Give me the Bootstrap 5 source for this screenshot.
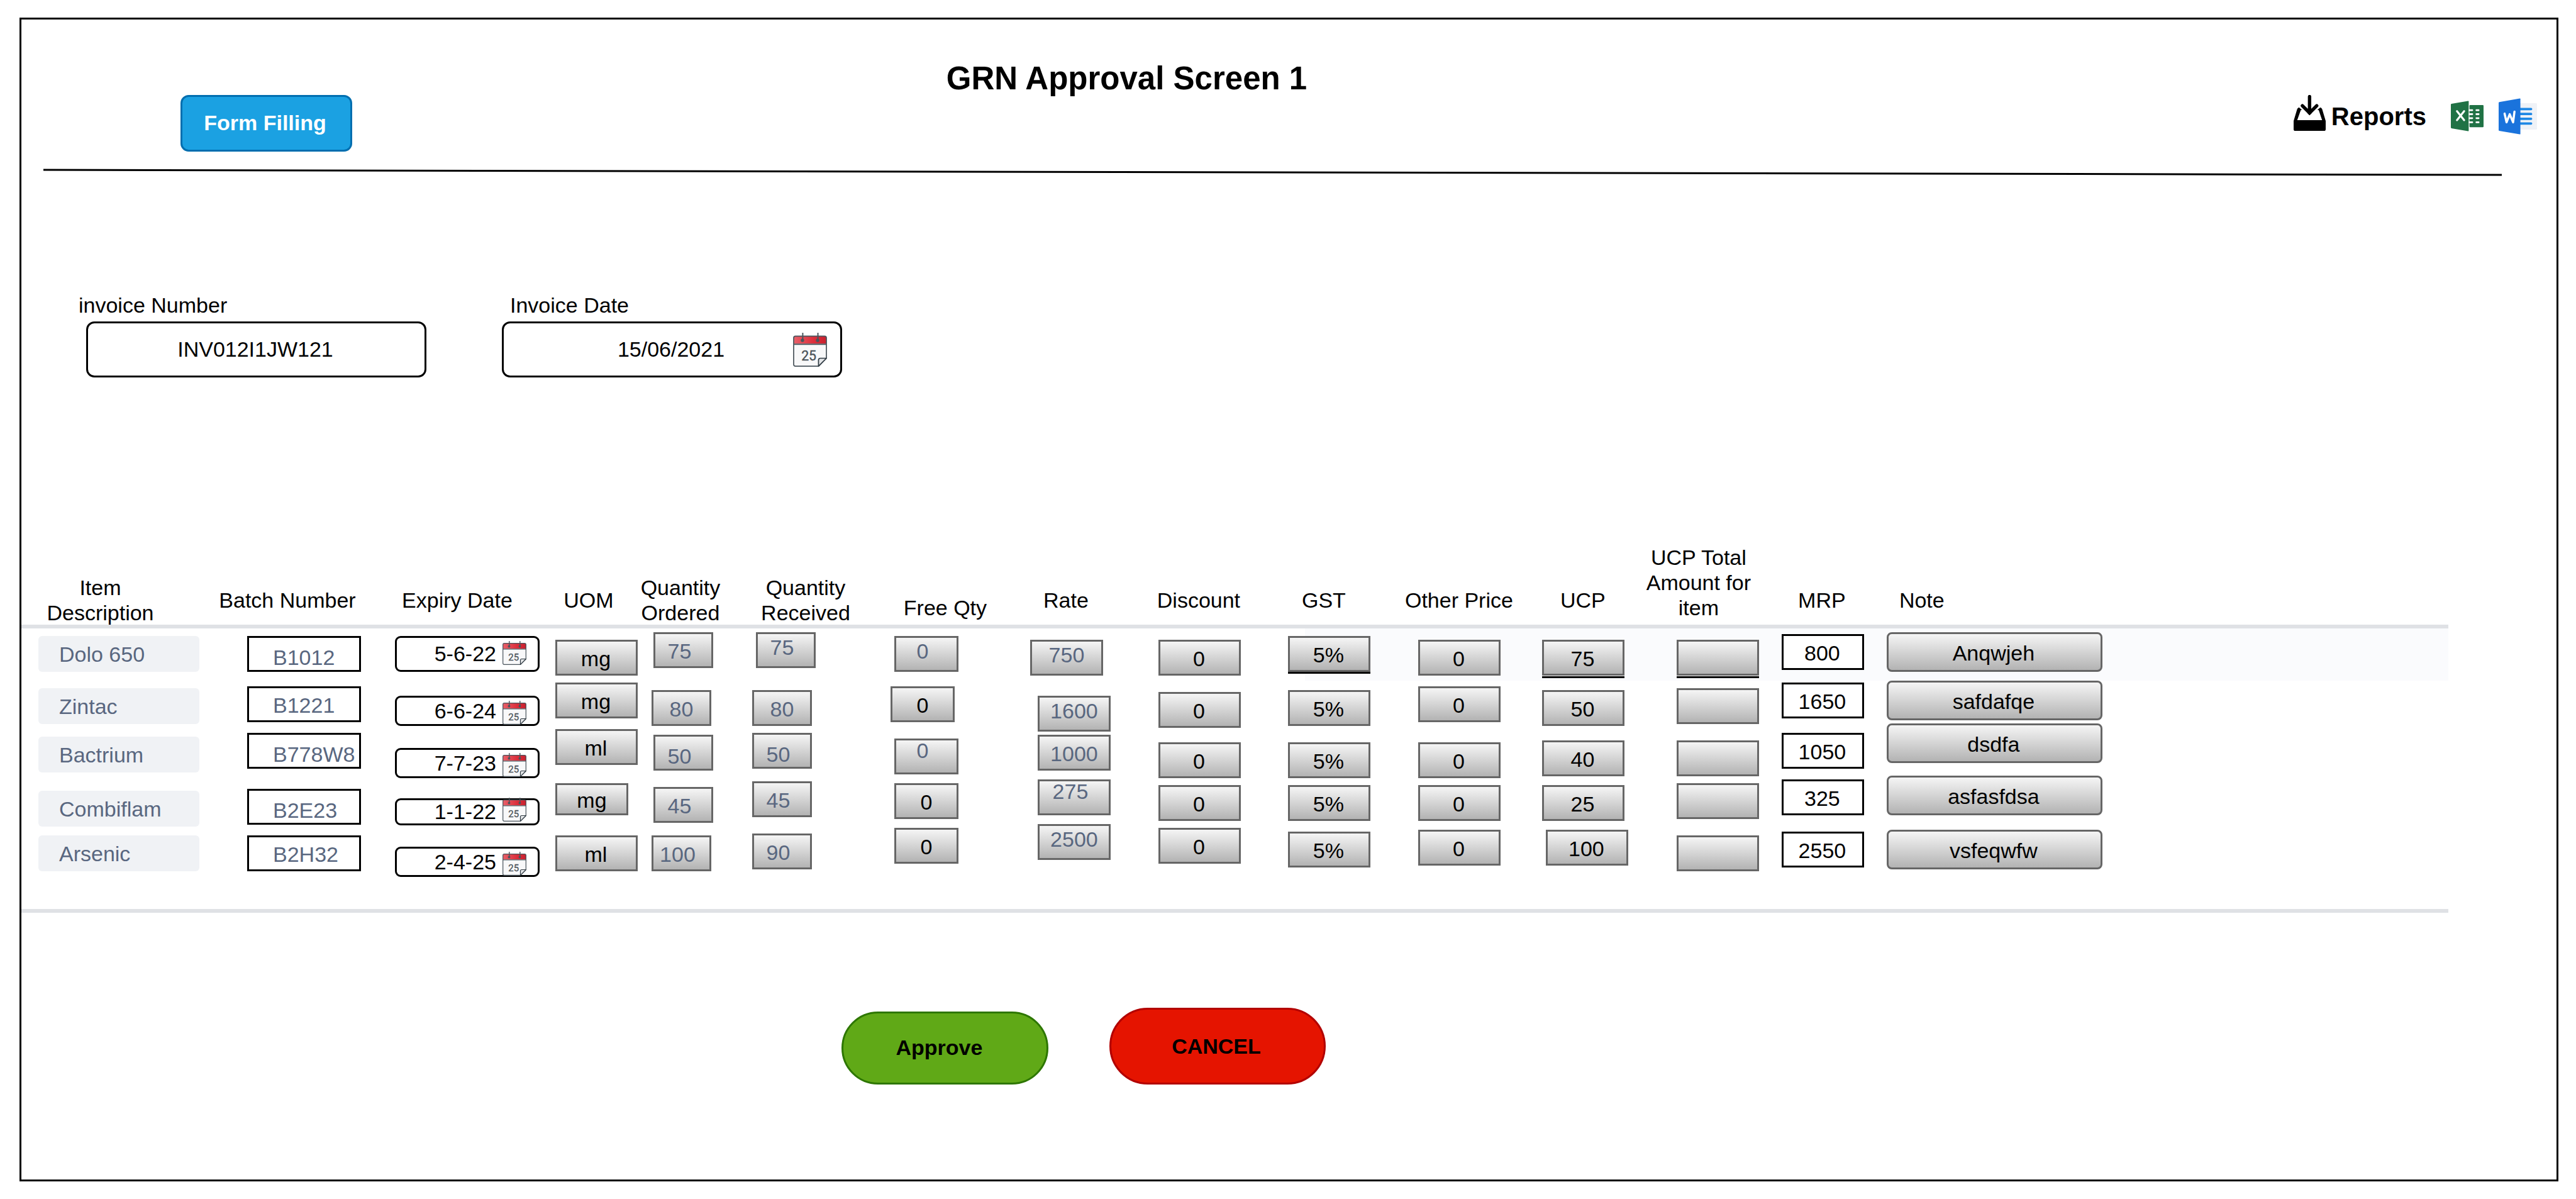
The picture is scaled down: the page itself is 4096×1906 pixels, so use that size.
<!DOCTYPE html>
<html lang="en">
<head>
<meta charset="utf-8">
<meta name="viewport" content="width=device-width, initial-scale=1">
<title>GRN Approval Screen 1</title>
<link rel="stylesheet" href="https://cdn.jsdelivr.net/npm/bootstrap@5.3.0/dist/css/bootstrap.min.css">
<style>
  body { font-family: "Liberation Sans", Arial, sans-serif; font-size: 34px; line-height: 40px; color: #000; background: #fff; }
  .screen { margin: 28px 28px 28px 31px; border: 3px solid #000; min-height: calc(100vh - 56px); }

  /* top bar */
  .topbar { display: grid; grid-template-columns: 1270fr 975fr 1786fr; height: 237px; }
  .btn-form { margin: 120px 0 0 253px; width: 273px; height: 90px; border: 3px solid #006eaf; border-radius: 13px; background: #1ba1e2; color: #fff; font-size: 34px; font-weight: 700; padding: 0 4px 2px 0; }
  .screen-title { font-size: 51px; line-height: 60px; font-weight: 700; padding-top: 64px; margin: 0; }
  .reports { padding: 120px 31px 0 0; }
  .reports-link { font-size: 40px; line-height: 48px; color: #000; gap: 9px; margin-right: 39px; }
  .reports-link svg { margin-bottom: 10px; }
  .word-link { margin-left: 24px; }
  .rule { display: block; margin: 0 87px 0 35px; }

  /* invoice fields */
  .fields { padding: 185px 0 0 91px; gap: 120px; }
  .fields label { display: block; margin-bottom: 6px; }
  .field-num .field-shell { margin-left: 12px; }
  .field-date label { padding-left: 13px; }
  .field-shell { width: 541px; }
  .field-shell .form-control { height: 89px; border: 3px solid #000; border-radius: 13px; text-align: center; padding-right: 3px; }
  .field-shell svg { margin-right: 24px; }
  .form-control { font-size: 34px; line-height: 40px; color: #000; padding: 0; background: #fff; }

  /* item table */
  .items { display: block; width: 95.73%; margin-top: 265px; }
  .items thead, .items tbody { display: block; }
  .items tr { display: grid; }
  .items thead { border-bottom: 6px solid #dfe1e5; }
  .items tbody { border-bottom: 6px solid #dfe1e5; }
  .items thead tr { grid-template-columns: 284fr 278fr 262fr 156fr 136fr 262fr 182fr 202fr 220fr 178fr 252fr 142fr 226fr 166fr 913fr; height: 128px; align-items: end; }
  .items th { font-weight: 400; text-align: center; padding-bottom: 20px; white-space: nowrap; }
  .items th.two { padding-bottom: 0; }
  .items th.low { padding-bottom: 8px; }
  .items th:first-child { padding-right: 34px; }
  .items th:last-child { text-align: left; padding-left: 40px; }
  .items tbody tr { padding-left: 27px; grid-template-columns: 332fr 235fr 255fr 153fr 160fr 220fr 222fr 204fr 206fr 207fr 197fr 214fr 167fr 167fr 893fr; height: 80px; }
  .items tbody tr.first { height: 83px; background: linear-gradient(to right, transparent 52.9%, #fafbfd 52.9%); }
  .items tbody tr.tight { height: 68px; }
  .items tbody tr.last { height: 135px; }
  .items td { padding: 0; min-width: 0; }

  .item-name { width: 256px; height: 57px; line-height: 59px; padding-left: 33px; border-radius: 6px; background: #f0f2f5; color: #596780; display: block; }
  .cell { height: 57px; border: 3px solid #666; border-radius: 0; background: linear-gradient(#f5f5f5, #b3b3b3); text-align: center; padding: 3px 0 0; }
  .cell.plain { background: #fff; border-color: #000; }
  .cell.soft { color: #596780; }
  .batch { width: 181px; padding-left: 38px; text-align: left; }
  .std { width: 131px; padding-right: 2px; }
  .qty { width: 95px; }
  .free { width: 102px; }
  .rate { width: 116px; }
  .unit-sm { width: 116px; height: 51px; }
  .note { width: 343px; height: 63px; border-radius: 8px; padding-right: 3px; }
  .txt-lo { padding-top: 12px; }
  .txt-hi { padding-top: 0; padding-bottom: 9px; }
  .txt-top { padding-top: 0; padding-bottom: 18px; }
  .txt-l { padding-right: 12px; }
  .under { box-shadow: 0 3px 0 #000; }
  .under-gap { box-shadow: 0 1px 0 #fff, 0 4px 0 #000; }

  .expiry { width: 230px; height: 48px; border: 3px solid #000; border-radius: 9px; background: #fff; padding-right: 18px; gap: 10px; }
  .expiry.tall { height: 57px; }
  .expiry.short { height: 43px; }
  .expiry .form-control { border: 0; height: 100%; text-align: right; min-width: 0; background: transparent; }
  .expiry svg { margin-top: 5px; flex: none; }
  .expiry.short svg { margin-top: -4px; }

  /* stagger steps of the cells */
  .dy-3 { margin-top: 3px; } .dy-6 { margin-top: 6px; } .dy-9 { margin-top: 9px; }
  .dy-12 { margin-top: 12px; } .dy-15 { margin-top: 15px; } .dy-18 { margin-top: 18px; }
  .dy-21 { margin-top: 21px; } .dy-24 { margin-top: 24px; } .dy-27 { margin-top: 27px; }
  .dy-30 { margin-top: 30px; } .dy-36 { margin-top: 36px; } .dy-39 { margin-top: 39px; }
  .dx-3 { margin-left: 3px; } .dx-6 { margin-left: 6px; } .dx-12 { margin-left: 12px; }

  /* actions */
  .actions { padding: 151px 0 0 1304px; gap: 97px; }
  .actions .btn { border-width: 3px; border-radius: 61px; font-size: 34px; font-weight: 700; color: #000; line-height: 40px; }
  .btn-approve { width: 329px; height: 116px; background: #60a917; border-color: #2d7600; padding: 0 18px 3px 0; }
  .btn-cancel { width: 344px; height: 122px; background: #e51400; border-color: #b20000; padding: 0 4px 0 0; }
</style>
<script src="https://cdn.jsdelivr.net/npm/bootstrap@5.3.0/dist/js/bootstrap.bundle.min.js"></script>
</head>
<body>
<svg width="0" height="0" class="position-absolute" aria-hidden="true">
  <defs>
    <linearGradient id="calRed" x1="0" x2="1" y1="0" y2="0"><stop offset="0" stop-color="#e8616a"/><stop offset=".6" stop-color="#dc2f3c"/><stop offset="1" stop-color="#c9202e"/></linearGradient>
    <symbol id="calendar" viewBox="0 0 56 56">
      <path d="M4 5.500H52Q55 5.500 55 8.500V42L42 55H4Q1 55 1 52V8.500Q1 5.500 4 5.500Z" fill="#f8f8f9"/>
      <path d="M4 5.500H52Q55 5.500 55 8.500V18H1V8.500Q1 5.500 4 5.500Z" fill="url(#calRed)"/>
      <path d="M1 19H55" stroke="#4a545c" stroke-width="2"/>
      <path d="M4 5.500H52Q55 5.500 55 8.500V42L42 55H4Q1 55 1 52V8.500Q1 5.500 4 5.500Z" fill="none" stroke="#4a545c" stroke-width="1.800"/>
      <path d="M42 55V45Q42 42 45 42H55Z" fill="#e4e6e8" stroke="#2f3a42" stroke-width="1.800" stroke-linejoin="round"/>
      <path d="M16 0V12M41 0V12" stroke="#4a545c" stroke-width="2"/>
      <circle cx="15.500" cy="12.500" r="2.800" fill="#4a545c"/><circle cx="40.500" cy="12.500" r="2.800" fill="#4a545c"/>
      <text x="26" y="46" text-anchor="middle" font-family="Roboto, sans-serif" font-size="22" fill="#4a5258" stroke="#4a5258" stroke-width=".4">25</text>
    </symbol>
  </defs>
</svg>

<main class="screen">
  <header class="topbar">
    <div><button type="button" class="btn btn-form">Form Filling</button></div>
    <h1 class="screen-title text-center">GRN Approval Screen 1</h1>
    <div class="reports d-flex justify-content-end align-items-start">
      <div class="d-flex align-items-center">
        <a href="#" class="reports-link d-flex align-items-center fw-bold text-decoration-none">
          <svg width="51" height="57" viewBox="0 0 161 180" aria-hidden="true">
            <path d="M27 62L42 75L36 76L18 126H143L126 76L119 75L134 62Q140 64 143 70L161 130V172Q161 180 153 180H8Q0 180 0 172V130L18 70Q21 64 27 62Z"/>
            <path d="M80 8V84M44 54L80 90L116 54" fill="none" stroke="#000" stroke-width="17" stroke-linecap="round"/>
            <path d="M68 90H92L80 102Z"/>
          </svg>
          Reports
        </a>
        <a href="#" class="d-flex" aria-label="Export to Excel">
          <svg width="52" height="49" viewBox="0 0 165 153" aria-hidden="true">
            <rect x="94" y="21" width="71" height="112" rx="4" fill="#207245"/>
            <path d="M3 15L87 0Q90 0 90 3V150Q90 153 87 153L3 138Q0 137 0 134V18Q0 16 3 15Z" fill="#207245"/>
            <path d="M94 47H108M94 67H108M94 87H108M94 108H108M129 47H140M129 67H140M129 87H140M129 108H140" stroke="#fff" stroke-width="9" stroke-linecap="round"/>
            <path d="M31 52L67 97M67 52L31 97" stroke="#fff" stroke-width="10" stroke-linecap="round"/>
          </svg>
        </a>
        <a href="#" class="word-link d-flex" aria-label="Export to Word">
          <svg width="61" height="58" viewBox="0 0 194 182" aria-hidden="true">
            <rect x="104" y="24" width="90" height="134" rx="5" fill="#eff2f7"/>
            <path d="M108 54H164M108 79H164M108 103H164M108 127H164" stroke="#1e88e5" stroke-width="12" stroke-linecap="round"/>
            <path d="M3 19L107 0Q110 0 110 3V179Q110 182 107 182L3 164Q0 163 0 160V22Q0 20 3 19Z" fill="#1a73dc"/>
            <path d="M30 77L40 121L56 80L73 121L80 67" fill="none" stroke="#fff" stroke-width="11" stroke-linecap="round" stroke-linejoin="round"/>
          </svg>
        </a>
      </div>
    </div>
  </header>
  <div class="rule"><svg class="d-block w-100" height="12" aria-hidden="true"><line x1="0" y1="2" x2="100%" y2="10" stroke="#000" stroke-width="3"/></svg></div>

  <form>
    <div class="fields d-flex">
      <div class="field-num">
        <label for="invNo">invoice Number</label>
        <div class="field-shell"><input id="invNo" type="text" class="form-control" value="INV012I1JW121"></div>
      </div>
      <div class="field-date">
        <label for="invDate">Invoice Date</label>
        <div class="field-shell position-relative">
          <input id="invDate" type="text" class="form-control" value="15/06/2021">
          <svg class="position-absolute top-50 end-0 translate-middle-y" width="54" height="54" aria-hidden="true"><use href="#calendar"/></svg>
        </div>
      </div>
    </div>

    <table class="items">
      <thead>
        <tr>
          <th class="two">Item<br>Description</th>
          <th>Batch Number</th>
          <th>Expiry Date</th>
          <th>UOM</th>
          <th class="two">Quantity<br>Ordered</th>
          <th class="two">Quantity<br>Received</th>
          <th class="low">Free Qty</th>
          <th>Rate</th>
          <th>Discount</th>
          <th>GST</th>
          <th>Other Price</th>
          <th>UCP</th>
          <th class="low">UCP Total<br>Amount for<br>item</th>
          <th>MRP</th>
          <th>Note</th>
        </tr>
      </thead>
      <tbody>
        <tr class="first">
          <td><span class="item-name dy-12">Dolo 650</span></td>
          <td><input class="form-control cell plain soft batch txt-lo dy-12" aria-label="Batch number" value="B1012"></td>
          <td><div class="expiry tall d-flex align-items-start dy-12"><input class="form-control" aria-label="Expiry date" value="5-6-22"><svg width="38" height="38" aria-hidden="true"><use href="#calendar"/></svg></div></td>
          <td><input class="form-control cell std dy-18" aria-label="UOM" value="mg" readonly></td>
          <td><input class="form-control cell soft qty txt-l dy-6 dx-3" aria-label="Quantity ordered" value="75" readonly></td>
          <td><input class="form-control cell soft qty txt-l txt-hi dy-6 dx-6" aria-label="Quantity received" value="75" readonly></td>
          <td><input class="form-control cell soft free txt-l txt-hi dy-12 dx-6" aria-label="Free quantity" value="0" readonly></td>
          <td><input class="form-control cell soft rate txt-hi dy-18" aria-label="Rate" value="750" readonly></td>
          <td><input class="form-control cell std dy-18" aria-label="Discount" value="0" readonly></td>
          <td><input class="form-control cell std under dy-12" aria-label="GST" value="5%" readonly></td>
          <td><input class="form-control cell std dy-18" aria-label="Other price" value="0" readonly></td>
          <td><input class="form-control cell std under-gap dy-18" aria-label="UCP" value="75" readonly></td>
          <td><input class="form-control cell std under-gap dy-18" aria-label="UCP total" value="" readonly></td>
          <td><input class="form-control cell plain std dy-9" aria-label="MRP" value="800"></td>
          <td><input class="form-control cell note dy-6" aria-label="Note" value="Anqwjeh" readonly></td>
        </tr>
        <tr class="tight">
          <td><span class="item-name dy-12">Zintac</span></td>
          <td><input class="form-control cell plain soft batch dy-9" aria-label="Batch number" value="B1221"></td>
          <td><div class="expiry d-flex align-items-start dy-24"><input class="form-control" aria-label="Expiry date" value="6-6-24"><svg width="38" height="38" aria-hidden="true"><use href="#calendar"/></svg></div></td>
          <td><input class="form-control cell std dy-3" aria-label="UOM" value="mg" readonly></td>
          <td><input class="form-control cell soft qty dy-15" aria-label="Quantity ordered" value="80" readonly></td>
          <td><input class="form-control cell soft qty dy-15" aria-label="Quantity received" value="80" readonly></td>
          <td><input class="form-control cell free dy-9" aria-label="Free quantity" value="0" readonly></td>
          <td><input class="form-control cell soft rate txt-hi dy-24 dx-12" aria-label="Rate" value="1600" readonly></td>
          <td><input class="form-control cell std dy-18" aria-label="Discount" value="0" readonly></td>
          <td><input class="form-control cell std dy-15" aria-label="GST" value="5%" readonly></td>
          <td><input class="form-control cell std dy-9" aria-label="Other price" value="0" readonly></td>
          <td><input class="form-control cell std dy-15" aria-label="UCP" value="50" readonly></td>
          <td><input class="form-control cell std dy-12" aria-label="UCP total" value="" readonly></td>
          <td><input class="form-control cell plain std dy-3" aria-label="MRP" value="1650"></td>
          <td><input class="form-control cell note" aria-label="Note" value="safdafqe" readonly></td>
        </tr>
        <tr>
          <td><span class="item-name dy-21">Bactrium</span></td>
          <td><input class="form-control cell plain soft batch txt-lo dy-15" aria-label="Batch number" value="B778W8"></td>
          <td><div class="expiry d-flex align-items-start dy-39"><input class="form-control" aria-label="Expiry date" value="7-7-23"><svg width="38" height="38" aria-hidden="true"><use href="#calendar"/></svg></div></td>
          <td><input class="form-control cell std dy-9" aria-label="UOM" value="ml" readonly></td>
          <td><input class="form-control cell soft qty txt-l txt-lo dy-18 dx-3" aria-label="Quantity ordered" value="50" readonly></td>
          <td><input class="form-control cell soft qty txt-l txt-lo dy-15" aria-label="Quantity received" value="50" readonly></td>
          <td><input class="form-control cell soft free txt-l txt-top dy-24 dx-6" aria-label="Free quantity" value="0" readonly></td>
          <td><input class="form-control cell soft rate dy-18 dx-12" aria-label="Rate" value="1000" readonly></td>
          <td><input class="form-control cell std dy-30" aria-label="Discount" value="0" readonly></td>
          <td><input class="form-control cell std dy-30" aria-label="GST" value="5%" readonly></td>
          <td><input class="form-control cell std dy-30" aria-label="Other price" value="0" readonly></td>
          <td><input class="form-control cell std dy-27" aria-label="UCP" value="40" readonly></td>
          <td><input class="form-control cell std dy-27" aria-label="UCP total" value="" readonly></td>
          <td><input class="form-control cell plain std dy-15" aria-label="MRP" value="1050"></td>
          <td><input class="form-control cell note" aria-label="Note" value="dsdfa" readonly></td>
        </tr>
        <tr>
          <td><span class="item-name dy-27">Combiflam</span></td>
          <td><input class="form-control cell plain soft batch txt-lo dy-24" aria-label="Batch number" value="B2E23"></td>
          <td><div class="expiry short d-flex align-items-start dy-39"><input class="form-control" aria-label="Expiry date" value="1-1-22"><svg width="38" height="38" aria-hidden="true"><use href="#calendar"/></svg></div></td>
          <td><input class="form-control cell unit-sm dy-15" aria-label="UOM" value="mg" readonly></td>
          <td><input class="form-control cell soft qty txt-l dy-21 dx-3" aria-label="Quantity ordered" value="45" readonly></td>
          <td><input class="form-control cell soft qty txt-l dy-12" aria-label="Quantity received" value="45" readonly></td>
          <td><input class="form-control cell free dy-15 dx-6" aria-label="Free quantity" value="0" readonly></td>
          <td><input class="form-control cell soft rate txt-l txt-top dy-9 dx-12" aria-label="Rate" value="275" readonly></td>
          <td><input class="form-control cell std dy-18" aria-label="Discount" value="0" readonly></td>
          <td><input class="form-control cell std dy-18" aria-label="GST" value="5%" readonly></td>
          <td><input class="form-control cell std dy-18" aria-label="Other price" value="0" readonly></td>
          <td><input class="form-control cell std dy-18" aria-label="UCP" value="25" readonly></td>
          <td><input class="form-control cell std dy-15" aria-label="UCP total" value="" readonly></td>
          <td><input class="form-control cell plain std dy-9" aria-label="MRP" value="325"></td>
          <td><input class="form-control cell note dy-3" aria-label="Note" value="asfasfdsa" readonly></td>
        </tr>
        <tr class="last">
          <td><span class="item-name dy-18">Arsenic</span></td>
          <td><input class="form-control cell plain soft batch dy-18" aria-label="Batch number" value="B2H32"></td>
          <td><div class="expiry d-flex align-items-start dy-36"><input class="form-control" aria-label="Expiry date" value="2-4-25"><svg width="38" height="38" aria-hidden="true"><use href="#calendar"/></svg></div></td>
          <td><input class="form-control cell std dy-18" aria-label="UOM" value="ml" readonly></td>
          <td><input class="form-control cell soft qty txt-l dy-18" aria-label="Quantity ordered" value="100" readonly></td>
          <td><input class="form-control cell soft qty txt-l dy-15" aria-label="Quantity received" value="90" readonly></td>
          <td><input class="form-control cell free dy-6 dx-6" aria-label="Free quantity" value="0" readonly></td>
          <td><input class="form-control cell soft rate txt-hi dx-12" aria-label="Rate" value="2500" readonly></td>
          <td><input class="form-control cell std dy-6" aria-label="Discount" value="0" readonly></td>
          <td><input class="form-control cell std dy-12" aria-label="GST" value="5%" readonly></td>
          <td><input class="form-control cell std dy-9" aria-label="Other price" value="0" readonly></td>
          <td><input class="form-control cell std dy-9 dx-6" aria-label="UCP" value="100" readonly></td>
          <td><input class="form-control cell std dy-18" aria-label="UCP total" value="" readonly></td>
          <td><input class="form-control cell plain std dy-12" aria-label="MRP" value="2550"></td>
          <td><input class="form-control cell note dy-9" aria-label="Note" value="vsfeqwfw" readonly></td>
        </tr>
      </tbody>
    </table>

    <div class="actions d-flex align-items-end">
      <button type="button" class="btn btn-approve">Approve</button>
      <button type="button" class="btn btn-cancel">CANCEL</button>
    </div>
  </form>
</main>
</body>
</html>
